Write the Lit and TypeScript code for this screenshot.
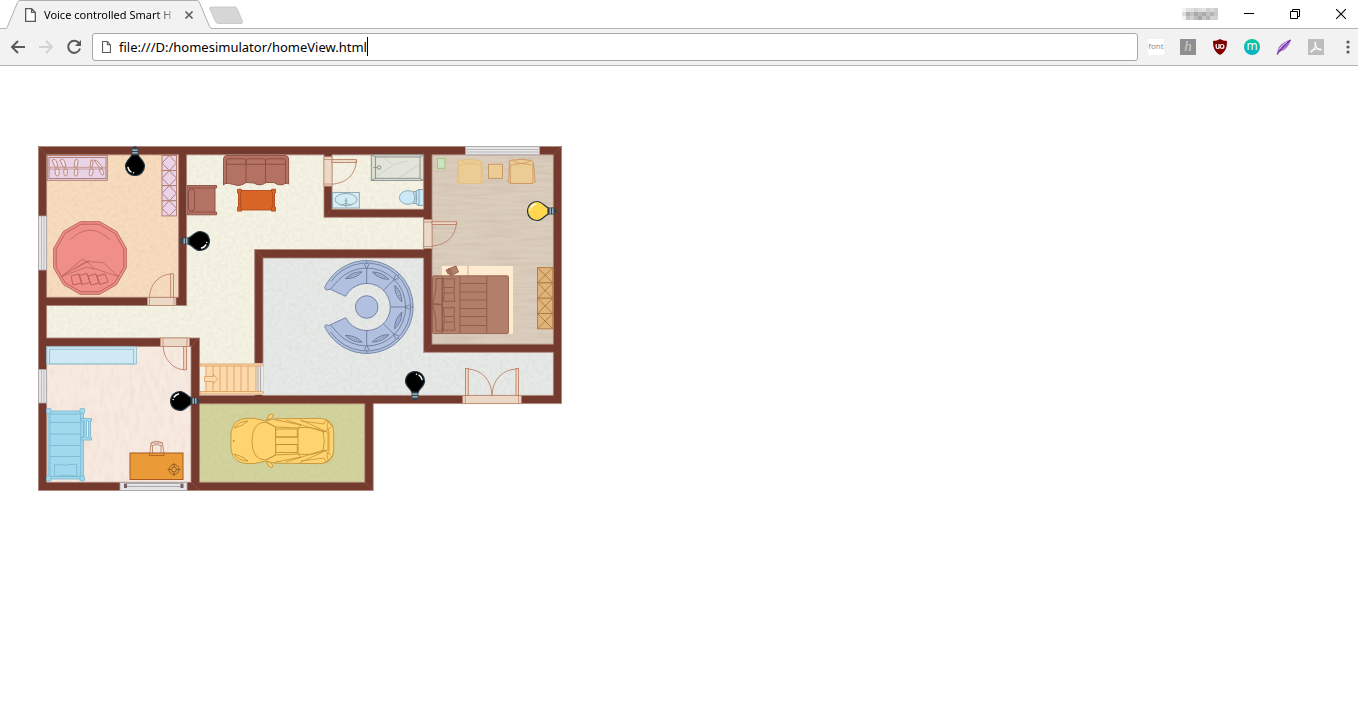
import { LitElement, html, svg, css } from "lit";
import { customElement, property, state } from "lit/decorators.js";
import { styleMap } from "lit/directives/style-map.js";

type Facing = "up" | "down" | "left" | "right";

interface Lamp {
  room: string;
  x: number;
  y: number;
  base: Facing;
  on: boolean;
}

const PLAN = { x: 38, y: 146, w: 524, h: 345 };

const polar = (cx: number, cy: number, r: number, deg: number) => {
  const a = (deg * Math.PI) / 180;
  return [cx + r * Math.cos(a), cy + r * Math.sin(a)].map((n) => n.toFixed(2));
};

const polygon = (cx: number, cy: number, r: number, sides: number) =>
  Array.from({ length: sides }, (_, i) =>
    polar(cx, cy, r, 180 / sides + (360 / sides) * i).join(",")
  ).join(" ");

@customElement("light-bulb")
export class LightBulb extends LitElement {
  @property() room = "";
  @property() base: Facing = "up";
  @property({ type: Boolean }) on = false;

  static styles = css`
    :host { display: block; }
    .lamp { display: block; width: 30px; height: 30px; padding: 0; border: 0; background: none; cursor: pointer; }
    .drawing { display: block; width: 30px; height: 30px; }
    .left { transform: rotate(-90deg); }
    .right { transform: rotate(90deg); }
    .down { transform: rotate(180deg); }
  `;

  render() {
    const glass = this.on ? "#ffd84f" : "#000";
    return html`
      <button class="lamp" aria-label=${this.room + " light"} aria-pressed=${this.on ? "true" : "false"}>
        <svg class=${"drawing " + this.base} viewBox="0 0 30 30">
          <path d="M13 1 Q15 -.4 17 1 L18.5 3 V9 H11.500 V3Z" fill="#34444f" />
          <path d="M12.300 4.200 H17.700 M12.300 6.800 H17.700" stroke="#b9cbd6" stroke-width="1.200" />
          <path d="M11.700 9 H18.300 C18.800 12 24.500 14.500 24.500 20 A9.500 9.500 0 0 1 5.500 20 C5.500 14.500 11.200 12 11.700 9Z"
            fill=${glass} stroke="#263844" stroke-width="1.200" />
          <path d="M8 21.500 Q8.800 24.500 11 25.800" fill="none" stroke="#fff" stroke-width="1.500" stroke-linecap="round" />
          <circle cx="13.500" cy="26.800" r=".8" fill="#fff" />
        </svg>
      </button>
    `;
  }
}

@customElement("floor-plan")
export class FloorPlan extends LitElement {
  @state() private lamps: Lamp[] = [
    { room: "Red bedroom", x: 135, y: 161, base: "up", on: false },
    { room: "Living room", x: 195, y: 241, base: "left", on: false },
    { room: "Master bedroom", x: 542, y: 211, base: "right", on: true },
    { room: "Study", x: 185, y: 401, base: "right", on: false },
    { room: "Hall", x: 415, y: 386, base: "down", on: false },
  ];

  static styles = css`
    :host { display: block; }
    .plan { position: relative; width: 100%; max-width: 524px; }
    .drawing { display: block; width: 100%; height: auto; }
    .spot { position: absolute; transform: translate(-50%, -50%); }
    .wall { fill: #753a2e; stroke: #a98379; stroke-width: .8; }
    .sill { fill: #ebd8c6; stroke: #bd8c72; stroke-width: .8; }
    .swing { fill: none; stroke: #b7765a; stroke-width: .8; }
    .leaf { fill: #efd9c7; stroke: #b7765a; stroke-width: .8; }
    .pane { fill: #e5e5e7; stroke: #aaa6a8; stroke-width: .8; }
    .thin { fill: none; stroke-width: .7; }
  `;

  private floors() {
    return svg`
      <defs>
        <filter id="grain" x="0" y="0" width="100%" height="100%">
          <feTurbulence type="fractalNoise" baseFrequency=".28" numOctaves="2" seed="4" result="n" />
          <feColorMatrix in="n" type="matrix" values="0 0 0 0 .35  0 0 0 0 .33  0 0 0 0 .22  .26 0 0 0 -.09" result="c" />
          <feComposite in="c" in2="SourceGraphic" operator="in" result="g" />
          <feMerge><feMergeNode in="SourceGraphic" /><feMergeNode in="g" /></feMerge>
        </filter>
        <filter id="wood" x="0" y="0" width="100%" height="100%">
          <feTurbulence type="fractalNoise" baseFrequency=".025 .3" numOctaves="3" seed="8" result="n" />
          <feColorMatrix in="n" type="matrix" values="0 0 0 0 .4  0 0 0 0 .3  0 0 0 0 .2  .5 0 0 0 -.19" result="c" />
          <feComposite in="c" in2="SourceGraphic" operator="in" result="g" />
          <feMerge><feMergeNode in="SourceGraphic" /><feMergeNode in="g" /></feMerge>
        </filter>
        <filter id="plank" x="0" y="0" width="100%" height="100%">
          <feTurbulence type="fractalNoise" baseFrequency=".2 .08" numOctaves="2" seed="3" result="n" />
          <feColorMatrix in="n" type="matrix" values="0 0 0 0 .6  0 0 0 0 .3  0 0 0 0 .2  .26 0 0 0 -.1" result="c" />
          <feComposite in="c" in2="SourceGraphic" operator="in" result="g" />
          <feMerge><feMergeNode in="SourceGraphic" /><feMergeNode in="g" /></feMerge>
        </filter>
      </defs>
      <g filter="url(#grain)">
        <path d="M46 154 H424 V250 H255 V396 H199 V338 H46Z" fill="#f5f3e4" />
        <rect x="46" y="154" width="133" height="144" fill="#f8dcbd" />
        <path d="M263 258 H424 V352 H554 V396 H258 V362 H263Z" fill="#e6e9e7" />
        <rect x="199" y="403" width="166" height="80" fill="#d3d39e" />
      </g>
      <rect x="46" y="346" width="145" height="137" fill="#f7eae1" filter="url(#plank)" />
      <rect x="432" y="154" width="122" height="191" fill="#dbcdbd" filter="url(#wood)" />
    `;
  }

  private walls() {
    return svg`
      <path class="wall" fill-rule="evenodd" d="M38.400 146.400 H561.600 V403.600 H373.200 V490.600 H38.400Z
        M46.600 154.800 V297.300 H178.600 V154.800Z
        M186.600 154.800 V305.500 H46.600 V338 H199.500 V395.400 H254.700 V249.500 H423.700 V217.300 H324 V154.800Z
        M332 154.800 V209.300 H423.700 V154.800Z
        M432 154.800 V344.200 H553.400 V154.800Z
        M263 258 V395.400 H553.400 V352.300 H423.700 V258Z
        M46.600 346.400 V482.300 H191 V346.400Z
        M199.500 403.800 V482.300 H364.800 V403.800Z" />
      <path d="M38 146 L46.600 154.800 M562 146 L553.400 154.800 M254.700 249.500 L263 258 M324 217.300 L332 209.300
        M423.700 352.300 L432 344.200 M191 346.400 L199.500 338 M191 482.300 L199.500 490 M365 482.300 L373 490.600"
        class="thin" stroke="#91594c" />
      <rect x="254" y="363" width="9.500" height="32" fill="#e6e9e7" />
      <path d="M258 363 V395 M260.500 363 V395" class="thin" stroke="#8f8f8f" />
    `;
  }

  private openings() {
    return svg`
      <rect class="pane" x="38.400" y="216" width="8.200" height="54" />
      <path d="M41.500 216 V270 M44 216 V270" stroke="#bcbcbe" />
      <rect class="pane" x="38.400" y="369.500" width="8.200" height="33.500" />
      <path d="M41.500 369.500 V403 M44 369.500 V403" stroke="#bcbcbe" />
      <rect class="pane" x="465.400" y="146.400" width="74" height="8.400" />
      <path d="M465.400 149.500 H539.400 M465.400 152 H539.400" stroke="#bcbcbe" />
      <rect class="pane" x="120" y="482.500" width="67" height="8" />
      <path d="M124 483.500 H183.500 M127 486.500 H181" stroke="#aaa7aa" />
      <path d="M124 484 h3 v4 h-3z M180.500 484 h3 v4 h-3z" fill="#795e60" />

      <rect class="sill" x="147.400" y="297.400" width="28.600" height="8" />
      <path class="sill" d="M149.500 297.400 V305.400 M174 297.400 V305.400" />
      <rect class="leaf" x="170.700" y="273.800" width="2.800" height="23.500" />
      <path class="swing" d="M170.700 274 A22 23.500 0 0 0 149.600 297" />

      <rect class="sill" x="160.500" y="338" width="29" height="8.400" />
      <path class="sill" d="M163 338 V346.400 M187 338 V346.400" />
      <rect class="leaf" x="183.700" y="346.500" width="2.800" height="23.300" />
      <path class="swing" d="M163.300 346.500 A22 24 0 0 0 184 369.800" />

      <rect class="sill" x="324" y="156.800" width="8" height="29.300" />
      <path class="sill" d="M324 159.500 H332 M324 184 H332" />
      <rect class="leaf" x="332" y="159.600" width="24.500" height="2.800" />
      <path class="swing" d="M356.500 160 Q355 182 332 184.300" />

      <rect class="sill" x="423.800" y="219.500" width="8.200" height="29" />
      <path class="sill" d="M423.800 222 H432 M423.800 246.500 H432" />
      <rect class="leaf" x="432" y="221.800" width="24.500" height="2.600" />
      <path class="swing" d="M456.500 222 Q455 244 432 246" />

      <rect class="sill" x="462.700" y="395.500" width="58.600" height="8" />
      <path class="sill" d="M465.400 395.500 V403.500 M518.500 395.500 V403.500" />
      <rect class="leaf" x="465.400" y="368.500" width="2.800" height="27" />
      <rect class="leaf" x="516" y="368.500" width="2.600" height="27" />
      <path class="swing" d="M468 369 C482 370 491.500 380 492 395.500 C492.500 380 502 370 516 369" />
    `;
  }

  private crossed(x: number, y: number, w: number, h: number, lozenge: boolean) {
    return svg`
      <rect x=${x} y=${y} width=${w} height=${h} />
      ${lozenge
        ? svg`<path d=${`M${x + w / 2} ${y} L${x + w} ${y + h / 2} L${x + w / 2} ${y + h} L${x} ${y + h / 2}Z`} />`
        : svg`<path d=${`M${x} ${y} L${x + w} ${y + h} M${x + w} ${y} L${x} ${y + h}`} />`}
    `;
  }

  private redBedroom() {
    return svg`
      <g fill="#ead3e6" stroke="#ad7768" stroke-width=".9">
        <rect x="47.300" y="155.500" width="60" height="24.800" />
        <rect x="49" y="157.500" width="57" height="21" />
        <g fill="#f2deeb" stroke-width=".8">
          <path d="M52 160 q3 -2 4.500 1 l1.500 6 h-3z M60 160 q3 -2 4.500 1 l1.500 6 h-3z M75 160 q3 -2 3 2 l-1 5 h-3z M91 160 q2 -1 2 2 l-1 5 h-2z M94 160 q3 0 5 3 l4 5 h-3z" />
          <path d="M55 169 q0 7 2 7 q3 0 2 -7z M64 169 q-1 7 2 7 q2 0 1 -7z M75 169 q-2 7 1 7 q2 0 2 -7z M90 169 q-2 7 1 7 q2 0 2 -7z M99 169 q2 7 4 6 q2 -1 -1 -6z" />
        </g>
        <path d="M48 167.400 H106 M48 169 H106" stroke="#c39a90" />
        ${[0, 1, 2, 3].map((i) => this.crossed(162, 155.5 + i * 15.1, 14.5, 15.1, true))}
      </g>
      <g fill="#ef8f88" stroke="#b35e59" stroke-width=".9">
        <polygon points=${polygon(90, 258, 37.6, 12)} />
        <polygon points=${polygon(90, 258, 35, 12)} />
        <path d="M70.500 239.500 Q90 221 110 239.500" class="thin" />
        <path d="M61.500 276.500 L82.500 259 L90 264.500 L94 268.500 L118.500 276.500 L103 262.500 L86 261.500 L61.500 276.500 L87 267 L94 269 M75 268.500 L90 260.500" class="thin" />
        <path d="M71 276 l8 -2 l3 9 l-9 2z M79 275.500 l8 -2 l3 9 l-8 2z M88 276 l8 -2 l3 9 l-8 2z M97 276 l8 -2 l3 8 l-8 2.500z" />
      </g>
    `;
  }

  private livingRoom() {
    return svg`
      <g fill="#b37263" stroke="#8a4c40" stroke-width=".9">
        <path d="M223.500 159 Q223.500 155.500 227 155.500 H285 Q288.600 155.500 288.600 159 V184 L286 183 Q280 187 274 182.500 L266 182.500 Q260 187 254 183 L246 182.500 Q240 187 234 184.500 L226 183 L223.500 185Z" />
        <path d="M226.500 184 V162 M285.500 184 V162 M246 164.500 V182.500 M265.500 164.500 V182.500" />
        <path d="M228 158.800 h16 q2 0 2 2.500 v3 h-19.500 v-3 q0 -2.500 1.500 -2.500z M248 158.800 h16 q1.500 0 1.500 2.500 v3 h-19.500 v-3 q0 -2.500 2 -2.500z M267 158.800 h17 q1.500 0 1.500 2.500 v3 h-20 v-3 q0 -2.500 1.500 -2.500z" />
        <path d="M187.400 185.500 H216.600 V188 H215 V212 H216.600 V214.800 H187.400Z" />
        <path d="M189 188 H215 M189 212 H215" />
        <rect x="188.500" y="189" width="6" height="22" rx="3" />
      </g>
      <g fill="#d86425" stroke="#b34c1e" stroke-width=".9">
        <rect x="238.500" y="190.500" width="36" height="19.500" />
        <path d="M237.500 189.300 h4 v3 h-1 v15 h1 v3.800 h-4 v-4 h1 v-14 h-1z M275.500 189.300 h-4 v3 h1 v15 h-1 v3.800 h4 v-4 h-1 v-14 h1z" />
      </g>
      <g fill="#fbd9aa" stroke="#dc9a61" stroke-width=".8">
        <rect x="206" y="365" width="50" height="28.500" />
        ${[213, 220, 227, 234, 241, 248].map((x) => svg`<path d=${`M${x} 365 V393`} />`)}
        <path d="M200 364 h62 q1.500 0 1.500 2 M200 364 v2 h62 M200 391.500 h62 q1.500 0 1.500 2.500 M200 391.500 v2.500 h62" />
        <path d="M204.500 376.500 h9 v-2 l4 4.500 l-4 4.500 v-2 h-9z" />
      </g>
    `;
  }

  private bathroom() {
    return svg`
      <g fill="#dcded1" stroke="#848c8c" stroke-width=".9">
        <rect x="371.300" y="154.800" width="52.300" height="25.600" />
        <rect x="375.600" y="157" width="44.400" height="21.300" fill="#e2e4d9" />
        <path d="M371.300 154.800 L375.600 157 M371.300 180.400 L375.600 178.300 M423.600 154.800 L420 157 M423.600 180.400 L420 178.300" />
        <path d="M377 176 L395 164 L407 161 M398 178 L419 165 M385 158 L391 164" stroke="#c4c9be" class="thin" />
        <path d="M373.500 167.500 h4" /><circle cx="379" cy="167.500" r="1.800" />
      </g>
      <g fill="#dcecf1" stroke="#789ba7" stroke-width=".8">
        <rect x="332.600" y="192.500" width="26.700" height="15.500" />
        <ellipse cx="346" cy="199.500" rx="11" ry="6" fill="#d2ecf4" />
        <path d="M346 198 V207 M341 205 Q346 202 351 205" /><circle cx="346" cy="201" r="1" />
        <path d="M418 189.500 H423.500 V205.500 H418Z" fill="#c9e8f7" />
        <path d="M416 191 L419 189.800 V205.200 L416 204Z" fill="#c9e8f7" />
        <ellipse cx="408" cy="197.500" rx="8.600" ry="6.800" fill="#cce9f8" />
        <path d="M413.500 191.500 H416 V203.500 H413.500 Q416 197.500 413.500 191.500Z" fill="#d6eef8" />
      </g>
    `;
  }

  private seat(x: number) {
    return svg`
      <path d=${`M${x + 2} 161 Q${x + 4} 159.500 ${x + 8} 160 Q${x + 14} 158.500 ${x + 20} 160 Q${x + 25} 159.500 ${x + 26} 163 L${x + 27.500} 180 L${x + 28.500} 181.500 Q${x + 27} 183 ${x + 25.500} 181.500 V183.500 H${x + 3} V181.500 Q${x + 1.500} 183 ${x + .3} 181.500 L${x + 1.500} 179Z`} />
      <path d=${`M${x + 3} 181.500 V165 Q${x + 14} 162 ${x + 25.500} 165 V181.500 M${x + 6} 161 q8 5 17 0`} class="thin" />
    `;
  }

  private masterBedroom() {
    return svg`
      <rect x="437.500" y="158.500" width="7.500" height="9.800" fill="#cde4be" stroke="#a3c47c" />
      <g fill="#ebcc94" stroke="#e2bd7f" stroke-width=".8">${this.seat(455.8)}</g>
      <g fill="#ebcc94" stroke="#cb925c" stroke-width=".9">
        ${this.seat(507.4)}
        <rect x="488.500" y="164.200" width="14" height="14.200" />
      </g>
      <rect x="441.800" y="266" width="71.200" height="67.800" fill="#ffebcf" />
      <path d="M468 266 V276" stroke="#d3ad91" />
      <g fill="#b2806a" stroke="#8c5545" stroke-width=".8">
        <path d="M448 269 l8 -3 l2.500 6 l-8 4z M446 270 l4 -1 l2 4 l-4 1z" />
        <rect x="432.500" y="275.800" width="76" height="57.800" rx="1.500" />
        <path d="M442.500 276 V333.500 M460 276 V333 M486.800 276 V333.500 M460 283.500 H486.800 M460 292 H486.800 M460 300 H486.800 M460 308.500 H486.800 M460 316.500 H486.800 M460 325.500 H486.800" />
        <path d="M436 278.500 h6 v26 l-9.500 -1 q4 -10 3.500 -25z M436 331 h6 v-26 l-9.500 -.5 q4 10 3.500 26.500z" />
        <path d="M443.500 278.500 q5 1 11 0 q-1 12 .3 23 q-5 -1 -11.300 0 q1.500 -12 0 -23z M443.500 307.500 q5 1 11 0 q-1 12 .3 23 q-5 -1 -11.300 0 q1.500 -12 0 -23z M444 287.500 h9.500 M444 293 h9.500 M444 316.500 h9.500 M444 322 h9.500" />
      </g>
      <g fill="#dfb47b" stroke="#ae7540" stroke-width=".9">
        ${[0, 1, 2, 3].map((i) => this.crossed(537.6, 267.6 + i * 15.3, 15.2, 15.3, false))}
      </g>
    `;
  }

  private hall() {
    const cx = 366.7;
    const cy = 307;
    const start = polar(cx, cy, 46.4, 205);
    const end = polar(cx, cy, 46.4, 155);
    const innerEnd = polar(cx, cy, 23.6, 153);
    const innerStart = polar(cx, cy, 23.6, 207);
    const lipStart = polar(cx, cy, 40.5, 206);
    const lipEnd = polar(cx, cy, 40.5, 154);
    return svg`
      <g fill="#b1c0de" stroke="#627393" stroke-width=".8">
        <path d=${`M${start} A46.400 46.400 0 1 1 ${end} Q325 324 329 325.500 L${lipEnd} L${innerEnd} A23.600 23.600 0 1 0 ${innerStart} L${lipStart} L329 289.500 Q325 291 ${start}Z`} />
        <path fill="none" d=${`M${polar(cx, cy, 44, 215)} A44 44 0 1 1 ${polar(cx, cy, 44, 145)}`} />
        <path fill="none" d=${`M${lipStart} L${polar(cx, cy, 39, 222)} A39 39 0 1 1 ${polar(cx, cy, 39, 138)} L${lipEnd}`} />
        ${[-90, -45, 0, 45, 90].map((a) => svg`
          <path d=${`M${polar(cx, cy, 23.6, a)} L${polar(cx, cy, 46.4, a)}`} />
          <path d=${`M${polar(cx, cy, 43, a - 3)} L${polar(cx, cy, 38, a)} L${polar(cx, cy, 43, a + 3)}`} />
        `)}
        ${[-112, -66, -23, 23, 66, 112].map((a) => svg`
          <g transform=${`rotate(${a} ${cx} ${cy})`}>
            <path d="M401 298 Q405 307 401 316 Q397 307 401 298Z" fill="#a7b7d5" />
            <path d="M401 301 V313" stroke-dasharray="1 1.500" />
          </g>
        `)}
        <circle cx=${cx} cy=${cy} r="11.300" />
      </g>
    `;
  }

  private study() {
    return svg`
      <g fill="#cfeaf5" stroke="#92bdcb" stroke-width=".9">
        <rect x="46.800" y="346.800" width="89.600" height="17.200" />
        <rect x="49.600" y="349.300" width="84" height="14.500" />
      </g>
      <g fill="#a0d8ed" stroke="#78b6ce" stroke-width=".8">
        <rect x="48" y="411" width="35.500" height="68" />
        <path d="M50 422.400 H80.500 M50 434 H80.500 M50 445.500 H80.500 M50 456.500 H80.500 M50 414 H80.500 M50 476.500 H80.500 M80.700 414 V477 M50 414 V477" />
        <rect x="46.500" y="408.500" width="4.500" height="5" rx="1" /><rect x="80" y="408.500" width="4.500" height="5" rx="1" />
        <rect x="46.500" y="476" width="4.500" height="5" rx="1" /><rect x="80" y="476" width="4.500" height="5" rx="1" />
        <path d="M54.500 464.500 Q65 466 76.500 464 L77 476 Q65 474 54.500 476.500Z" />
        <path d="M81 418.500 H91.500 V421 H90.500 V437.500 H91.500 V440 H81 V437.500 H84 V421 H81Z M86.500 421 V437.500 H88.500 V421Z" />
      </g>
      <path d="M149.700 455 L151 443 Q156.500 439.500 162.500 443 L164 455 M151 446 Q156.500 443 162.500 446 M151 443 H162.500 M152.500 446 V453 M161 446 V453" class="thin" stroke="#a66751" />
      <rect x="130" y="453" width="53" height="26.500" fill="#ea9a36" stroke="#a75920" />
      <path d="M149.500 453.500 V455.500 H164 V453.500" fill="none" stroke="#a75920" stroke-width=".8" />
      <g fill="none" stroke="#8d5b26" stroke-width=".9">
        <circle cx="174" cy="469.500" r="5" /><circle cx="174" cy="469.500" r="2.500" />
        <path d="M174 463 V467 M174 472 V476 M167.500 469.500 H171.500 M176.500 469.500 H180.500" />
      </g>
    `;
  }

  private garage() {
    return svg`
      <g fill="#ffd470" stroke="#bd8c31" stroke-width=".8" stroke-linejoin="round">
        <path d="M266.500 420 l2.500 -5 q3 -2 4.500 0 q0 3 -4 4z M266.500 462 l2.500 4.500 q3 2 4 0 q-.5 -3.500 -4.500 -5z" />
        <path d="M231 441 C230.500 430 232 421 245 418.500 L254 418.300 L266 421 L275 418.800 L320 418.300 Q333.500 419 333.700 432 V450 Q333.500 462.500 321 463.600 L275 463.200 L266 461 L254 463.600 L245 463.400 C232 461 230.500 452 231 441Z" />
        <path d="M266 422 Q252 422 252 441 Q252 460 266 460 L275.500 455 V427Z M266 422 L275.500 427 L298 428 L301 425 L274 419.500 M266 460 L275.500 455 L298 454 L301 457 L274 462.500" />
        <rect x="275.800" y="429" width="21.500" height="8" /><rect x="275.800" y="444.500" width="21.500" height="8" />
        <path d="M275.800 437 H297.500 M275.800 444.500 H297.500 M298 428 Q311 426 323 431 Q325.500 441 323 451 Q311 456 298 454Z" />
        <path d="M286 420 L302 425 L324 432 L331 427 M286 462 L302 457 L324 450 L331 455 M301 421 L324 424 L326 420 L333 427 M301 461 L324 458 L326 462 L333 455 M300 419.500 L325 431 M300 462.500 L325 451 M323 431 L328 432 V450 L323 451 M329 421 Q325 426 329 431 V451 Q325 456 329 461" class="thin" />
        <path d="M234 428 Q238 421.500 248 421 Q243 426 234 428Z M234 454 Q238 460.500 248 461 Q243 456 234 454Z" />
        <circle cx="233.700" cy="441" r=".6" fill="#8a6a2c" />
      </g>
    `;
  }

  render() {
    return html`
      <div class="plan">
        <svg class="drawing" viewBox=${`${PLAN.x} ${PLAN.y} ${PLAN.w} ${PLAN.h}`}>
          ${this.floors()} ${this.walls()} ${this.openings()} ${this.redBedroom()} ${this.livingRoom()}
          ${this.bathroom()} ${this.masterBedroom()} ${this.hall()} ${this.study()} ${this.garage()}
        </svg>
        ${this.lamps.map(
          (l, i) => html`
            <light-bulb
              class="spot"
              style=${styleMap({
                left: ((l.x - PLAN.x) / PLAN.w) * 100 + "%",
                top: ((l.y - PLAN.y) / PLAN.h) * 100 + "%",
              })}
              .room=${l.room}
              .base=${l.base}
              .on=${l.on}
              @click=${() => this.toggle(i)}
            ></light-bulb>
          `
        )}
      </div>
    `;
  }

  private toggle(index: number) {
    this.lamps = this.lamps.map((l, i) => (i === index ? { ...l, on: !l.on } : l));
  }
}

const profileShades = [
  ["#f3f3f3", "#e2e2e2", "#dedede", "#d5d5d5", "#dcdcdc", "#e4e4e4", "#cfcfcf", "#d8d8d8", "#cdcdcd"],
  ["#dddddd", "#b2b2b2", "#c4c4c4", "#a9a9a9", "#b8b8b8", "#aaaaaa", "#c0c0c0", "#b3b3b3", "#c9c9c9"],
  ["#f2f2f2", "#c4c4c4", "#d0d0d0", "#bcbcbc", "#a6a6a6", "#c6c6c6", "#b5b5b5", "#d3d3d3", "#d2d2d2"],
];

@customElement("app-root")
export class AppRoot extends LitElement {
  @state() private address = "file:///D:/homesimulator/homeView.html";

  static styles = css`
    :host {
      display: flex;
      flex-direction: column;
      min-height: 100vh;
      background: #fff;
      color: #000;
      font-family: "Noto Sans", "Open Sans", sans-serif;
    }
    * { box-sizing: border-box; }
    button { padding: 0; border: 0; background: none; font: inherit; color: inherit; }
    svg { display: block; }
    .strip { display: flex; height: 29px; border-bottom: 1px solid #b6b4b6; }
    .tab { position: relative; display: flex; align-items: center; width: 206px; height: 29px; margin-left: 6px; padding: 0 15px 0 19px; }
    .shape { position: absolute; left: 0; top: 0; }
    .page { position: relative; flex: none; }
    .title {
      position: relative;
      flex: 1;
      min-width: 0;
      margin-left: 8px;
      white-space: nowrap;
      font: 11px/16px "Noto Sans", sans-serif;
      -webkit-mask-image: linear-gradient(to right, #000 112px, transparent 134px);
      mask-image: linear-gradient(to right, #000 112px, transparent 134px);
    }
    .shut { position: relative; flex: none; width: 16px; height: 16px; }
    .fresh { align-self: flex-start; margin: 6px 0 0 -4px; }
    .frame { display: flex; align-items: center; gap: 12px; height: 27px; margin-left: auto; }
    .profile { margin-right: 2px; }
    .control { display: grid; place-items: center; width: 34px; height: 27px; }
    .bar { display: flex; align-items: center; height: 37px; padding-left: 4px; background: #f2f2f2; border-bottom: 1px solid #b6b4b6; }
    .nav { display: grid; place-items: center; width: 28px; height: 28px; }
    .address {
      display: flex;
      align-items: center;
      flex: 1;
      min-width: 0;
      height: 28px;
      margin: 0 2px 0 4px;
      padding-left: 9px;
      background: #fff;
      border: 1px solid #a9a8a9;
      border-radius: 3px;
    }
    .url {
      field-sizing: content;
      max-width: 100%;
      height: 24px;
      margin-left: 8px;
      padding: 0;
      border: 0;
      outline: 0;
      background: none;
      color: #000;
      font: 13px/24px "Noto Sans", sans-serif;
    }
    .caret { width: 1px; height: 19px; margin-bottom: 2px; background: #000; }
    .extension { display: grid; place-items: center; width: 32px; height: 28px; }
    .badge { display: block; text-align: center; }
    .font { display: flex; justify-content: center; width: 16px; height: 16px; background: #fff; color: #888; font: 8px/14px "Open Sans", sans-serif; }
    .letter { width: 16px; height: 16px; background: #8f8f8f; color: #d0d0d0; font: italic 15px/15px "Liberation Serif", serif; }
    .round { width: 16px; height: 16px; border-radius: 8px; background: linear-gradient(#08c6a0, #09b2c9); color: #fff; font: 12px/14px "Open Sans", sans-serif; }
    .more { display: grid; place-items: center; width: 20px; height: 28px; margin-left: 6px; }
    .view { flex: 1; padding: 80px 38px; }
  `;

  private pageIcon(w: number, h: number) {
    return html`<svg class="page" width=${w} height=${h} viewBox="0 0 10 14" preserveAspectRatio="none">
      <path d="M.6 .6 H6 L9.400 4.500 V13.400 H.6Z M6 .6 V4.500 H9.400" fill="#fff" stroke="#5a5a5a" stroke-width="1.200" />
    </svg>`;
  }

  render() {
    return html`
      <header>
        <div class="strip">
          <div class="tab">
            <svg class="shape" width="206" height="29" viewBox="0 0 206 29">
              <path d="M0 29 V28.500 Q1 28 1.500 26.500 L11.500 2.500 Q12.200 .5 14 .5 H191 Q192.800 .5 193.500 2.500 L203.500 26.500 Q204 28 205.500 28.500 V29Z" fill="#f2f2f2" />
              <path d="M0 28.500 Q1 28 1.500 26.500 L11.500 2.500 Q12.200 .5 14 .5 H191 Q192.800 .5 193.500 2.500 L203.500 26.500 Q204 28 206 28.500" fill="none" stroke="#b0aeb0" />
            </svg>
            ${this.pageIcon(11, 14)}
            <span class="title">Voice controlled Smart H</span>
            <button class="shut" aria-label="Close tab">
              <svg width="16" height="16" viewBox="0 0 16 16"><path d="M4.500 4.500 L11.500 11.500 M11.500 4.500 L4.500 11.500" stroke="#5a5a5a" stroke-width="1.600" /></svg>
            </button>
          </div>
          <button class="fresh" aria-label="New tab">
            <svg width="36" height="19" viewBox="0 0 36 19"><path d="M3 1 H27 Q28.500 1 29.200 2.500 L34.500 15.500 Q35 17.500 33 17.500 H10 Q8.300 17.500 7.500 15.500 L1.800 3 Q1.200 1 3 1Z" fill="#d6d6d6" stroke="#c4c4c4" stroke-width=".8" /></svg>
          </button>
          <div class="frame">
            <svg class="profile" width="36" height="12" viewBox="0 0 36 12" shape-rendering="crispEdges">
              ${profileShades.map((row, y) => row.map((c, x) => svg`<rect x=${x * 4} y=${y * 4} width="4" height="4" fill=${c} />`))}
            </svg>
            <button class="control" aria-label="Minimize"><svg width="10" height="10"><path d="M0 4.500 H10" stroke="#000" /></svg></button>
            <button class="control" aria-label="Restore"><svg width="10" height="10"><path d="M.5 2.500 H7.500 V9.500 H.5Z M2.500 2.500 V.5 H9.500 V7.500 H7.500" fill="none" stroke="#000" /></svg></button>
            <button class="control" aria-label="Close"><svg width="10" height="10"><path d="M0 0 L10 10 M10 0 L0 10" stroke="#000" stroke-width="1.100" /></svg></button>
          </div>
        </div>
        <div class="bar">
          <button class="nav" aria-label="Back"><svg width="16" height="16" viewBox="0 0 16 16"><path d="M15 8 H2.500 M8 2 L2 8 L8 14" fill="none" stroke="#5a5a5a" stroke-width="2" /></svg></button>
          <button class="nav" aria-label="Forward"><svg width="16" height="16" viewBox="0 0 16 16"><path d="M1 8 H13.500 M8 2 L14 8 L8 14" fill="none" stroke="#d2d2d2" stroke-width="2" /></svg></button>
          <button class="nav" aria-label="Reload"><svg width="16" height="16" viewBox="0 0 16 16"><path d="M13 4.200 A6 6 0 1 0 14 9.500" fill="none" stroke="#5a5a5a" stroke-width="2" /><path d="M15 1 V7 H9Z" fill="#5a5a5a" /></svg></button>
          <div class="address">
            ${this.pageIcon(9, 12)}
            <input class="url" type="text" aria-label="Address" spellcheck="false" .value=${this.address}
              @input=${(e: Event) => (this.address = (e.target as HTMLInputElement).value)} />
            <span class="caret"></span>
          </div>
          <button class="extension" aria-label="Font finder"><span class="badge font">font</span></button>
          <button class="extension" aria-label="Highlighter"><span class="badge letter">h</span></button>
          <button class="extension" aria-label="Content blocker">
            <svg width="16" height="16" viewBox="0 0 16 16">
              <path d="M8 0 Q11 2 15 2 Q15.500 12 8 16 Q.5 12 1 2 Q5 2 8 0Z" fill="#800000" />
              <path d="M4.200 5 V8 Q4.200 9.500 5.600 9.500 Q7 9.500 7 8 V5 V9.700" fill="none" stroke="#fff" stroke-width="1.200" />
              <circle cx="10" cy="7.400" r="1.900" fill="none" stroke="#fff" stroke-width="1.200" />
            </svg>
          </button>
          <button class="extension" aria-label="Mail"><span class="badge round">m</span></button>
          <button class="extension" aria-label="Feather">
            <svg width="16" height="16" viewBox="0 0 16 16">
              <path d="M1 15 Q2 6 8 3.500 Q11 1.500 15 .5 Q14 5 11 8.500 Q8 12 3.500 13Z" fill="#a873d0" />
              <path d="M1 15.500 Q5 9 14.500 1" fill="none" stroke="#6b3598" stroke-width="1.300" />
              <path d="M3 10.500 Q6 6 11 3" fill="none" stroke="#dcbcf0" stroke-width="1" />
            </svg>
          </button>
          <button class="extension" aria-label="PDF tools">
            <svg width="16" height="16" viewBox="0 0 16 16">
              <path d="M0 0 H16 V16 H0Z" fill="#bdbdbd" />
              <path d="M3 13 C6 11 8.500 6 7.500 3.500 C7 2.500 6.500 4 7.500 6.500 C8.500 9 11 11.500 13 11 C14 10 9 8.500 4 11.500 Q2.500 12.500 3 13Z" fill="none" stroke="#fff" stroke-width="1.100" />
            </svg>
          </button>
          <button class="more" aria-label="Menu"><svg width="4" height="14" viewBox="0 0 4 14"><g fill="#5a5a5a"><circle cx="2" cy="2" r="1.600" /><circle cx="2" cy="7" r="1.600" /><circle cx="2" cy="12" r="1.600" /></g></svg></button>
        </div>
      </header>
      <main class="view"><floor-plan></floor-plan></main>
    `;
  }
}
